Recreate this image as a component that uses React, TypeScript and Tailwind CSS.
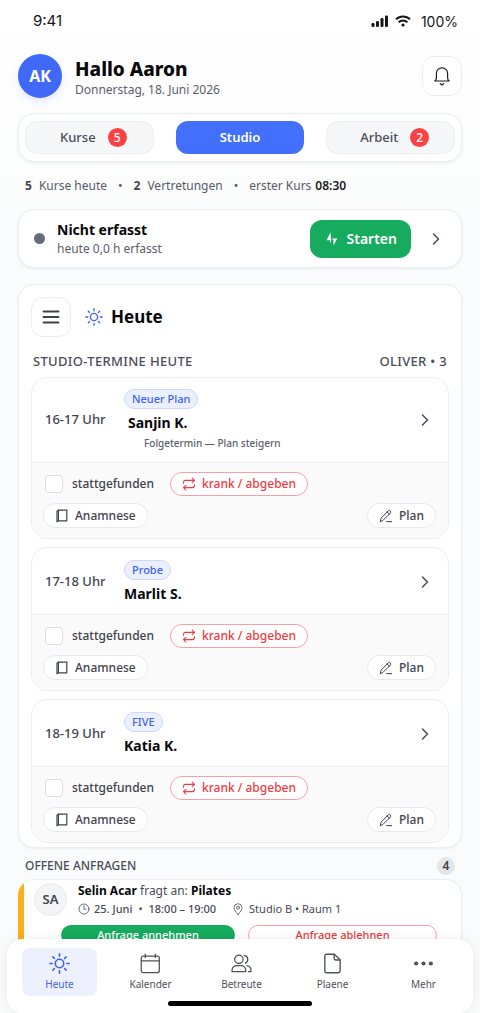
import React from "react";

type IconProps = { className?: string };

function Svg({
  className,
  box = 24,
  width = 1.8,
  children,
}: IconProps & { box?: number; width?: number; children: React.ReactNode }) {
  return (
    <svg
      viewBox={`0 0 ${box} ${box}`}
      fill="none"
      stroke="currentColor"
      strokeWidth={width}
      strokeLinecap="round"
      strokeLinejoin="round"
      aria-hidden="true"
      className={className}
    >
      {children}
    </svg>
  );
}

const SunIcon = ({ className }: IconProps) => (
  <Svg className={className} width={1.8}>
    <circle cx="12" cy="12" r="4.8" />
    <path d="M12 1v2.6M12 20.4V23M1 12h2.6M20.4 12H23M4.4 4.4l1.7 1.7M17.9 17.9l1.7 1.7M4.4 19.6l1.7-1.7M17.9 6.1l1.7-1.7" />
  </Svg>
);

const BellIcon = ({ className }: IconProps) => (
  <Svg className={className} box={20} width={1.2}>
    <path d="M2.8 15h14.4c-1.300-.8-1.600-1.800-1.600-3.600V7.400A5.600 5.600 0 0 0 4.400 7.400v4c0 1.800-.3 2.800-1.600 3.600z" />
    <path d="M8.300 17.700 10 19l1.700-1.300" />
  </Svg>
);

const ChevronIcon = ({ className }: IconProps) => (
  <Svg className={className} box={12} width={1.5}>
    <path d="M3.500 1 8.500 6l-5 5" />
  </Svg>
);

const MenuIcon = ({ className }: IconProps) => (
  <Svg className={className} box={18} width={1.8}>
    <path d="M1.500 3.500h15M1.500 9h15M1.500 14.500h15" />
  </Svg>
);

const SwapIcon = ({ className }: IconProps) => (
  <Svg className={className} box={14} width={1.1}>
    <path d="M1.500 6.200V5.400a2 2 0 0 1 2-2h8.800M10.200 1.200l2.300 2.200-2.300 2.200" />
    <path d="M12.500 7.800v.8a2 2 0 0 1-2 2H1.700M3.800 8.400l-2.300 2.200 2.300 2.200" />
  </Svg>
);

const BookIcon = ({ className }: IconProps) => (
  <Svg className={className} box={14} width={1.200}>
    <path d="M3.400 1.200h8.400v10.600H3.400z" />
    <path d="M3.400 1.200 2 2.200v10.600l1.400-1" />
  </Svg>
);

const PenIcon = ({ className }: IconProps) => (
  <Svg className={className} box={14} width={1}>
    <path d="M1.300 12.400l.8-3.300 7.200-7.300a1.250 1.250 0 0 1 1.800 0l.3.300a1.250 1.250 0 0 1 0 1.800l-7.200 7.300zM8.200 3l2.100 2.100M7.600 12.600h5" />
  </Svg>
);

const ClockIcon = ({ className }: IconProps) => (
  <Svg className={className} box={12} width={0.8}>
    <circle cx="6" cy="6" r="5" />
    <path d="M6 3v3.200h2" />
  </Svg>
);

const PinIcon = ({ className }: IconProps) => (
  <Svg className={className} box={12} width={0.8}>
    <path d="M6 11.400C3.800 9 2 6.900 2 4.700a4 4 0 0 1 8 0c0 2.200-1.800 4.300-4 6.700z" />
    <circle cx="6" cy="4.700" r="1.500" />
  </Svg>
);

const CalendarIcon = ({ className }: IconProps) => (
  <Svg className={className} box={20} width={1.2}>
    <rect x="1.200" y="3" width="17.200" height="15.800" rx="2" />
    <path d="M1.200 7.400h17.200M5 1v3.400M14.600 1v3.400" />
  </Svg>
);

const PeopleIcon = ({ className }: IconProps) => (
  <Svg className={className} box={20} width={1.200}>
    <circle cx="7.500" cy="6" r="4" />
    <path d="M1 17.800v-1.400c0-2.800 2.400-4.400 4.600-4.400h3.800c2.200 0 4.600 1.600 4.600 4.400v1.400z" />
    <path d="M12.600 2.200a4 4 0 0 1 1 7.600M15.200 12c2.200.5 3.800 2 3.800 4.200v1.600h-2.400" />
  </Svg>
);

const FileIcon = ({ className }: IconProps) => (
  <Svg className={className} box={20} width={1.300}>
    <path d="M11.800 1.200H4.400a1.700 1.700 0 0 0-1.700 1.700v14.200a1.700 1.700 0 0 0 1.700 1.700h11.200a1.700 1.700 0 0 0 1.700-1.700V6.600z" />
    <path d="M11.600 1.400v3.700a1.600 1.600 0 0 0 1.600 1.600h4" />
  </Svg>
);

const DotsIcon = ({ className }: IconProps) => (
  <svg viewBox="0 0 20 20" fill="currentColor" aria-hidden="true" className={className}>
    <circle cx="3" cy="10" r="2" />
    <circle cx="10" cy="10" r="2" />
    <circle cx="17" cy="10" r="2" />
  </svg>
);

function StatusBar() {
  return (
    <div className="flex h-[41px] items-center justify-between pl-[33px] pr-[22px] font-[Inter,sans-serif] text-[15px] leading-5 text-[#16171b]">
      <span>9:41</span>
      <div className="flex items-center">
        <svg viewBox="0 0 18 12" className="mr-1.5 h-3 w-[18px]" fill="currentColor" aria-hidden="true">
          <rect x="0.500" y="8" width="3" height="4" rx="1.200" />
          <rect x="5" y="6" width="3" height="6" rx="1.200" />
          <rect x="9.500" y="3" width="3" height="9" rx="1.200" />
          <rect x="14" y="0.500" width="3" height="11.500" rx="1.200" />
        </svg>
        <svg viewBox="0 0 16 12" className="mr-2.5 h-3 w-4" fill="none" stroke="currentColor" strokeWidth="2" aria-hidden="true">
          <path d="M1 4.300a10 10 0 0 1 14 0" />
          <path d="M3.600 7.300a6.300 6.300 0 0 1 8.800 0" />
          <circle cx="8" cy="10" r="1.600" fill="currentColor" stroke="none" />
        </svg>
        <span className="pt-0.5 text-sm leading-5">100%</span>
      </div>
    </div>
  );
}

function Header() {
  return (
    <header className="flex items-center pt-[13px]">
      <div className="flex size-11 items-center justify-center rounded-full bg-[#4169f8] text-base font-bold text-white shadow-[0_3px_8px_rgba(65,105,248,0.14)]">
        AK
      </div>
      <div className="ml-[13px] flex-1 pt-1">
        <h1 className="text-[19px] leading-[22px] font-extrabold text-[#07080b]">Hallo Aaron</h1>
        <p className="mt-0.5 text-xs leading-4 text-[#5a5e6b]">Donnerstag, 18. Juni 2026</p>
      </div>
      <button
        type="button"
        aria-label="Mitteilungen"
        className="flex size-10 items-center justify-center rounded-xl border border-[#ebedf0] bg-white text-[#1b1d22]"
      >
        <BellIcon className="size-5" />
      </button>
    </header>
  );
}

function Tabs() {
  const badge = "flex size-[19px] items-center justify-center rounded-full bg-[#fb4144] text-xs text-white";
  const idle =
    "flex h-[33px] items-center justify-center gap-3 rounded-xl border border-[#eceef1] bg-[#f6f7f9] pl-2 text-[13px] font-medium text-[#4a4d59]";
  return (
    <nav
      aria-label="Bereiche"
      className="mt-[15px] grid grid-cols-3 gap-[22px] rounded-2xl border border-[#eceef1] bg-white px-1.5 py-[7px] shadow-[0_1px_3px_rgba(20,25,40,0.08)]"
    >
      <button type="button" className={idle}>
        Kurse <span className={badge}>5</span>
      </button>
      <button
        type="button"
        aria-current="page"
        className="flex h-[33px] items-center justify-center rounded-xl bg-[#4270fc] text-[13px] font-semibold text-white"
      >
        Studio
      </button>
      <button type="button" className={idle}>
        Arbeit <span className={badge}>2</span>
      </button>
    </nav>
  );
}

function Summary() {
  return (
    <p className="mt-4 flex items-center pl-[7px] text-xs leading-4 text-[#575b67]">
      <b className="mr-[7px] font-bold text-[#41444f]">5</b>
      <span>Kurse heute</span>
      <span className="mx-[11px]">•</span>
      <b className="mr-[7px] font-bold text-[#41444f]">2</b>
      <span>Vertretungen</span>
      <span className="mx-[11px]">•</span>
      <span>erster Kurs</span>
      <b className="ml-1 font-semibold text-[#1a1c22]">08:30</b>
    </p>
  );
}

function TimeTracker() {
  return (
    <section className="mt-[15px] flex h-[59px] items-center rounded-2xl border border-[#eceef1] bg-white pr-[19px] pl-[15px] shadow-[0_1px_3px_rgba(20,25,40,0.08)]">
      <span className="size-[11px] rounded-full bg-[#686b79]" />
      <div className="ml-3 flex-1">
        <h2 className="text-sm leading-5 font-bold text-[#07080b]">Nicht erfasst</h2>
        <p className="text-xs leading-[18px] text-[#5a5e6b]">heute 0,0 h erfasst</p>
      </div>
      <button
        type="button"
        className="flex h-[38px] items-center gap-[7px] rounded-xl bg-[#16ab5e] px-3.5 text-sm font-semibold text-white"
      >
        <svg viewBox="0 0 16 16" fill="currentColor" className="size-4" aria-hidden="true">
          <path d="M6.500 1.200 2.600 9.300h3.600v2.500l1-.6z" />
          <path d="M8.300 7.400v1.400h1.100l.2 5.600 3.600-7z" />
        </svg>
        Starten
      </button>
      <button type="button" aria-label="Zeiterfassung öffnen" className="ml-[19px] text-[#4a4d59]">
        <ChevronIcon className="size-3" />
      </button>
    </section>
  );
}

type Appointment = { id: string; time: string; tag: string; name: string; note?: string };

const appointments: Appointment[] = [
  { id: "t16", time: "16-17 Uhr", tag: "Neuer Plan", name: "Sanjin K.", note: "Folgetermin — Plan steigern" },
  { id: "t17", time: "17-18 Uhr", tag: "Probe", name: "Marlit S." },
  { id: "t18", time: "18-19 Uhr", tag: "FIVE", name: "Katia K." },
];

function AppointmentCard({ id, time, tag, name, note }: Appointment) {
  const pill =
    "flex h-[25px] items-center gap-1.5 rounded-full border border-[#e6e8ec] bg-white px-[11px] text-xs font-medium text-[#3f424d]";
  return (
    <article className="overflow-hidden rounded-2xl border border-[#eceef1] bg-white">
      <div className={note ? "flex items-center py-[11px] pl-[13px]" : "flex items-center pt-3 pb-2.5 pl-[13px]"}>
        <span className="w-[79px] text-[13px] font-medium text-[#3f424d]">{time}</span>
        <div className="flex-1">
          <span className="flex h-5 w-fit items-center rounded-full border border-[#ccd6fb] bg-[#ebf0fe] px-[7px] text-[11px] leading-4 font-medium text-[#3f63e8]">
            {tag}
          </span>
          <h4 className={note ? "mt-1 pl-1 text-sm leading-5 font-bold text-[#07080b]" : "mt-1 text-sm leading-5 font-bold text-[#07080b]"}>
            {name}
          </h4>
          {note && <p className="mt-0.5 pl-5 text-[10px] leading-4 font-medium text-[#5a5e6b]">{note}</p>}
        </div>
        <button type="button" aria-label={`${name} öffnen`} className="mr-[17px] text-[#4a4d59]">
          <ChevronIcon className="size-3" />
        </button>
      </div>
      <div className="flex flex-col gap-[7px] border-t border-[#eceef1] bg-[#fafafb] pt-[9px] pr-3 pb-2.5 pl-[11px]">
        <div className="flex items-center">
          <input
            id={id}
            type="checkbox"
            className="ml-0.5 size-[18px] appearance-none rounded-[4px] border border-[#dcdee3] bg-white checked:bg-[#4270fc]"
          />
          <label htmlFor={id} className="ml-[9px] text-xs font-medium text-[#3f424d]">
            stattgefunden
          </label>
          <button
            type="button"
            className="ml-4 flex h-6 items-center gap-1.5 rounded-full border border-[#fb9fa4] bg-white px-[11px] text-xs font-medium text-[#ee3a40]"
          >
            <SwapIcon className="size-3.5" />
            krank / abgeben
          </button>
        </div>
        <div className="flex justify-between">
          <button type="button" className={pill}>
            <BookIcon className="size-3.5" />
            Anamnese
          </button>
          <button type="button" className={pill}>
            <PenIcon className="size-3.5" />
            Plan
          </button>
        </div>
      </div>
    </article>
  );
}

function Today() {
  return (
    <section className="mt-4 rounded-2xl border border-[#eceef1] bg-white px-3 pt-3 pb-1 shadow-[0_1px_3px_rgba(20,25,40,0.05)]">
      <div className="flex items-center">
        <button
          type="button"
          aria-label="Menü"
          className="flex size-10 items-center justify-center rounded-xl border border-[#eceef1] bg-white text-[#3f424d]"
        >
          <MenuIcon className="size-[18px]" />
        </button>
        <SunIcon className="ml-3.5 size-[18px] text-[#3f66ee]" />
        <h2 className="ml-2 text-[17px] leading-6 font-bold text-[#07080b]">Heute</h2>
      </div>
      <div className="mt-4 flex justify-between px-0.5 text-[13px] leading-4 font-medium tracking-wide text-[#4a4d59]">
        <h3>STUDIO-TERMINE HEUTE</h3>
        <span>OLIVER • 3</span>
      </div>
      <div className="mt-2 flex flex-col gap-2">
        {appointments.map((a) => (
          <AppointmentCard key={a.id} {...a} />
        ))}
      </div>
    </section>
  );
}

function Requests() {
  return (
    <section className="mt-[9px]">
      <div className="flex items-center justify-between px-[7px]">
        <h2 className="text-xs leading-4 font-medium text-[#4a4d59]">OFFENE ANFRAGEN</h2>
        <span className="flex size-[18px] items-center justify-center rounded-full bg-[#e4e6ea] text-xs font-semibold text-[#3f424d]">
          4
        </span>
      </div>
      <article className="mt-1 overflow-hidden rounded-2xl border border-l-0 border-[#eceef1] bg-white shadow-[0_1px_3px_rgba(20,25,40,0.05)]">
        <div className="border-l-6 border-[#f9b01c] pt-[3px] pr-6 pb-4 pl-2.5">
          <div className="flex">
            <div className="flex size-[33px] items-center justify-center rounded-full border border-[#e6e8ec] bg-[#f3f4f6] text-[13px] font-semibold text-[#3f424d]">
              SA
            </div>
            <div className="ml-[11px]">
              <p className="text-xs leading-4 text-[#4a4d59]">
                <b className="font-bold text-[#07080b]">Selin Acar</b> fragt an:{" "}
                <b className="font-bold text-[#07080b]">Pilates</b>
              </p>
              <p className="mt-0.5 flex items-center text-[11px] leading-4 text-[#474a56]">
                <ClockIcon className="mr-1 size-3" />
                <span className="font-medium">25. Juni</span>
                <span className="mx-1.5">•</span>
                <span className="font-medium">18:00 – 19:00</span>
                <PinIcon className="mr-[5px] ml-4 size-3" />
                Studio B • Raum 1
              </p>
            </div>
          </div>
          <div className="mt-2 ml-[27px] flex gap-[13px]">
            <button type="button" className="h-5 w-[174px] rounded-[10px] bg-[#16ab5e] text-[11px] leading-4 font-medium text-white">
              Anfrage annehmen
            </button>
            <button
              type="button"
              className="flex h-5 flex-1 items-center justify-center rounded-[10px] border border-[#fb9fa4] bg-white text-[11px] leading-4 font-medium text-[#ee3a40]"
            >
              Anfrage ablehnen
            </button>
          </div>
        </div>
      </article>
    </section>
  );
}

const tabs = [
  { label: "Heute", Icon: SunIcon, active: true },
  { label: "Kalender", Icon: CalendarIcon, active: false },
  { label: "Betreute", Icon: PeopleIcon, active: false },
  { label: "Plaene", Icon: FileIcon, active: false },
  { label: "Mehr", Icon: DotsIcon, active: false },
];

function BottomNav() {
  return (
    <nav
      aria-label="Hauptnavigation"
      className="absolute inset-x-[7px] bottom-0 rounded-2xl bg-white pt-[9px] pb-[7px] shadow-[0_0_12px_rgba(20,25,40,0.08)]"
    >
      <div className="grid grid-cols-5 pr-1 pl-[7px]">
        {tabs.map(({ label, Icon, active }) => (
          <a
            key={label}
            href={`#${label.toLowerCase()}`}
            aria-current={active ? "page" : undefined}
            className={
              active
                ? "mx-2 flex h-12 flex-col items-center rounded-lg bg-[#edf1fe] pt-[5px] text-[#3f63e8]"
                : "mx-2 flex h-12 flex-col items-center rounded-lg pt-[5px] text-[#4f525e]"
            }
          >
            <Icon className="size-[21px]" />
            <span className="mt-[3px] text-[10px] leading-[14px]">{label}</span>
          </a>
        ))}
      </div>
      <div className="mx-auto mt-[5px] h-[5px] w-36 rounded-full bg-black" />
    </nav>
  );
}

export default function App() {
  return (
    <div className="relative h-dvh overflow-hidden bg-linear-to-b from-white to-[#fafbfc] to-30% font-['Noto_Sans',sans-serif]">
      <div className="h-full overflow-y-auto [scrollbar-width:none]">
        <StatusBar />
        <main className="px-[18px] pb-24">
          <Header />
          <Tabs />
          <Summary />
          <TimeTracker />
          <Today />
          <Requests />
        </main>
      </div>
      <BottomNav />
    </div>
  );
}
